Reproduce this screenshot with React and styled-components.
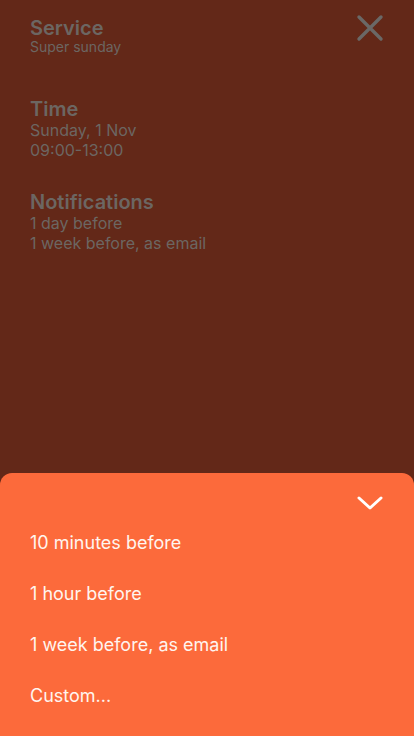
import React from 'react'
import styled, { createGlobalStyle } from 'styled-components'

const GlobalStyle = createGlobalStyle`
  html, body { margin: 0; padding: 0; }
  body {
    font-family: Inter, "Noto Sans", "Liberation Sans", sans-serif;
    background: #632818;
  }
`

const Page = styled.div`
  width: 414px;
  height: 736px;
  display: flex;
  flex-direction: column;
  background: #632818;
  overflow: hidden;
`

const Details = styled.div`
  position: relative;
  padding: 17px 30px 0 30px;
  display: flex;
  flex-direction: column;
`

const Section = styled.div`
  display: flex;
  flex-direction: column;
  margin-bottom: ${(p) => p.$space || 32}px;
`

const Heading = styled.div`
  font-size: 20px;
  font-weight: 600;
  line-height: 22px;
  color: #6c6662;
`

const Line = styled.div`
  font-size: 16px;
  line-height: 20px;
  color: #6c6662;
`

const SmallLine = styled(Line)`
  font-size: 14px;
  line-height: 15px;
`

const CloseButton = styled.button`
  position: absolute;
  top: 14px;
  right: 30px;
  width: 28px;
  height: 28px;
  padding: 0;
  border: 0;
  background: none;
  display: flex;
  align-items: center;
  justify-content: center;
`

const Sheet = styled.div`
  margin-top: auto;
  height: 263px;
  box-sizing: border-box;
  background: #fc6a3b;
  border-radius: 12px 12px 0 0;
  padding: 21px 30px 0 30px;
  display: flex;
  flex-direction: column;
`

const SheetTop = styled.div`
  display: flex;
  justify-content: flex-end;
  height: 23px;
`

const Option = styled.div`
  font-size: 18px;
  line-height: 51px;
  color: #fff5ef;
`

const options = ['10 minutes before', '1 hour before', '1 week before, as email', 'Custom...']

export default function App () {
  return (
    <Page>
      <GlobalStyle />
      <Details>
        <Section $space={44}>
          <Heading>Service</Heading>
          <SmallLine>Super sunday</SmallLine>
        </Section>
        <Section $space={31}>
          <Heading>Time</Heading>
          <Line>Sunday, 1 Nov</Line>
          <Line>09:00-13:00</Line>
        </Section>
        <Section>
          <Heading>Notifications</Heading>
          <Line>1 day before</Line>
          <Line>1 week before, as email</Line>
        </Section>
        <CloseButton aria-label="close">
          <svg width="28" height="28" viewBox="0 0 28 28">
            <path d="M3 3 L25 25 M25 3 L3 25" stroke="#6a6866" strokeWidth="3.4" strokeLinecap="round" fill="none" />
          </svg>
        </CloseButton>
      </Details>
      <Sheet>
        <SheetTop>
          <svg width="28" height="18" viewBox="0 0 28 18">
            <path d="M3 4 L14 14 L25 4" stroke="#ffffff" strokeWidth="3" strokeLinecap="round" strokeLinejoin="round" fill="none" />
          </svg>
        </SheetTop>
        {options.map((o) => <Option key={o}>{o}</Option>)}
      </Sheet>
    </Page>
  )
}
